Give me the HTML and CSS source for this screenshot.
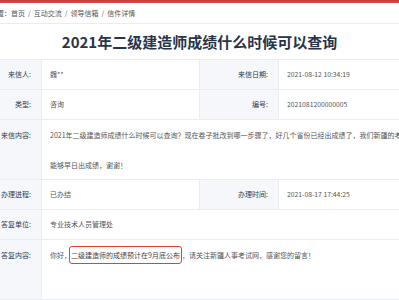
FILE: index.html
```html
<!DOCTYPE html>
<html lang="zh">
<head>
<meta charset="utf-8">
<title>信件详情</title>
<link rel="stylesheet" href="styles.css">
</head>
<body>
<div class="topbar"></div>
<div class="page">
  <div class="crumb">位置：<a>首页</a><span class="sep">/</span><a>互动交流</a><span class="sep">/</span><a>领导信箱</a><span class="sep">/</span><a>信件详情</a></div>
  <h1 class="title">2021年二级建造师成绩什么时候可以查询</h1>
  <div class="table">
    <div class="lab">来信人:</div>
    <div class="val">魏**</div>
    <div class="lab">来信日期:</div>
    <div class="val num">2021-08-12 10:34:19</div>

    <div class="lab">类型:</div>
    <div class="val">咨询</div>
    <div class="lab">编号:</div>
    <div class="val num">2021081200000005</div>

    <div class="lab tall">来信内容:</div>
    <div class="val span3 tall">2021年二级建造师成绩什么时候可以查询？现在卷子批改到哪一步骤了，好几个省份已经出成绩了，我们新疆的考生非常着急，希望<br>能够早日出成绩，谢谢！</div>

    <div class="lab">办理进程:</div>
    <div class="val">已办结</div>
    <div class="lab">办理时间:</div>
    <div class="val num">2021-08-17 17:44:25</div>

    <div class="lab">答复单位:</div>
    <div class="val span3">专业技术人员管理处</div>

    <div class="lab tall">答复内容:</div>
    <div class="val span3 tall">你好，<span class="mark">二级建造师的成绩预计在9月底公布</span>，请关注新疆人事考试网，感谢您的留言！</div>
  </div>
</div>
</body>
</html>
```

FILE: styles.css
```css
html, body {
  margin: 0;
  padding: 0;
  background: #fff;
  overflow: hidden;
}
body {
  font-family: "Noto Sans CJK SC", "Noto Sans", sans-serif;
  font-size: 7px;
  color: #555;
}
.topbar {
  height: 3px;
  background: linear-gradient(#c43c36, #d0544e);
}
.page {
  width: 475px;
  margin-left: -38px;
}
.crumb {
  height: 20px;
  line-height: 20px;
  padding-left: 28px;
  color: #555;
  border-bottom: 1px solid #e9ecf1;
  white-space: nowrap;
}
.crumb a {
  color: #555;
}
.crumb .sep {
  margin: 0 3px;
  color: #666;
}
.title {
  margin: 0;
  height: 35px;
  line-height: 35px;
  text-align: center;
  font-size: 15px;
  font-weight: bold;
  color: #283449;
  border-bottom: 1px solid #e9ecf1;
}
.table {
  display: grid;
  grid-template-columns: 80px 157px 80px 158px;
}
.lab, .val {
  line-height: 29px;
  border-bottom: 1px solid #e9ecf1;
  white-space: nowrap;
  overflow: hidden;
}
.lab {
  background: #f5f7fa;
  text-align: right;
  padding-right: 10px;
  color: #2e3b4e;
  border-right: 1px solid #e9ecf1;
  border-left: 1px solid #e9ecf1;
}
.val {
  padding-left: 8px;
}
.num {
  font-size: 6.8px;
}
.span3 {
  grid-column: span 3;
}
.tall {
  height: 59px;
  line-height: 30px;
}
.lab.tall {
  line-height: 30px;
}
.mark {
  display: inline-block;
  line-height: 14px;
  padding: 1px 1px;
  margin-left: -2px;
  border: 1.5px solid #e3402f;
  border-radius: 3px;
  color: #444;
}
```
